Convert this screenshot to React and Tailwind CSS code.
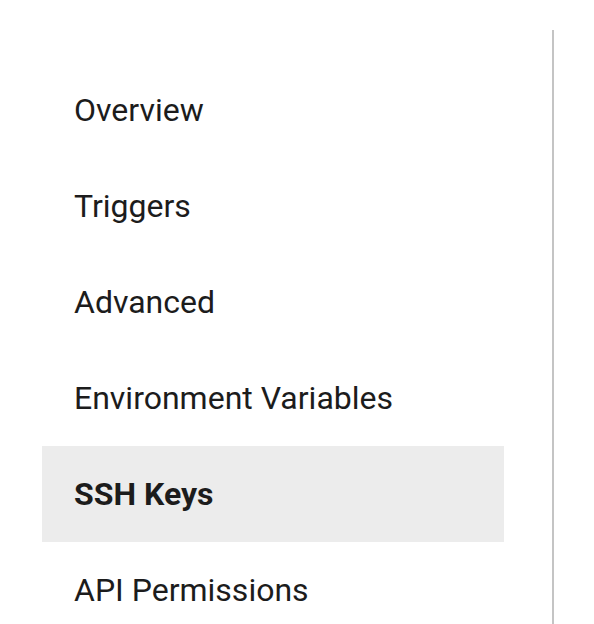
const items = [
  { title: "Overview" },
  { title: "Triggers" },
  { title: "Advanced" },
  { title: "Environment Variables" },
  { title: "SSH Keys", active: true },
  { title: "API Permissions" },
]

export default function App() {
  return (
    <div className="bg-white h-[624px] overflow-hidden pl-[42px] pt-[30px] font-['Roboto',sans-serif]">
      <nav className="w-[512px] h-[594px] border-r-2 border-[#c4c4c4] pt-8">
        {items.map((item) => (
          <div
            key={item.title}
            className={`w-[462px] h-24 flex items-center pl-8 text-[32px] text-[#1c1c1c] ${
              item.active ? "bg-[#ececec] font-bold" : "font-normal"
            }`}
          >
            {item.title}
          </div>
        ))}
      </nav>
    </div>
  )
}
